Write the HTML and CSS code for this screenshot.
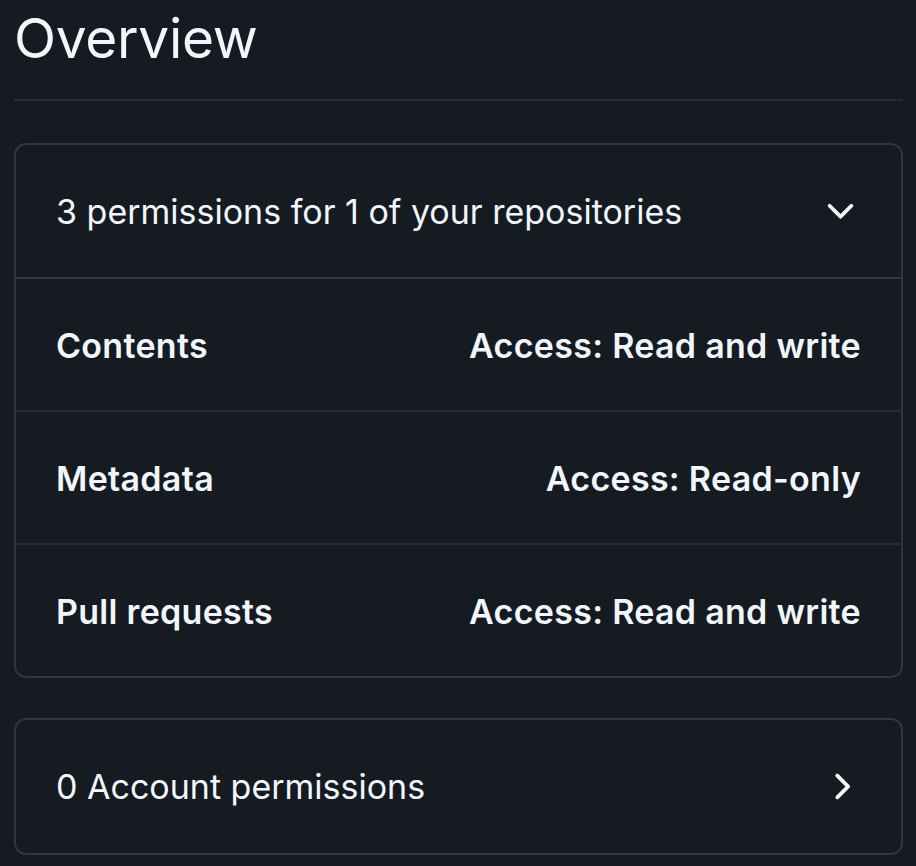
FILE: index.html
```html
<!DOCTYPE html>
<html lang="en">
<head>
<meta charset="utf-8">
<title>Overview</title>
<link rel="stylesheet" href="styles.css">
</head>
<body>
<main class="page">
  <h1 class="title">Overview</h1>
  <section class="box">
    <div class="box-header">
      <span class="header-text">3 permissions for 1 of your repositories</span>
      <svg class="icon" viewBox="0 0 16 16" aria-hidden="true"><path d="M12.78 5.22a.749.749 0 0 1 0 1.06l-4.25 4.25a.749.749 0 0 1-1.06 0L3.22 6.28a.749.749 0 1 1 1.06-1.06L8 8.94l3.72-3.72a.749.749 0 0 1 1.06 0Z"/></svg>
    </div>
    <div class="row"><span class="row-name">Contents</span><span class="row-access">Access: Read and write</span></div>
    <div class="row"><span class="row-name">Metadata</span><span class="row-access">Access: Read-only</span></div>
    <div class="row"><span class="row-name">Pull requests</span><span class="row-access">Access: Read and write</span></div>
  </section>
  <section class="box box-single">
    <div class="box-header no-border">
      <span class="header-text">0 Account permissions</span>
      <svg class="icon" viewBox="0 0 16 16" aria-hidden="true"><path d="M6.22 3.22a.75.75 0 0 1 1.06 0l4.25 4.25a.75.75 0 0 1 0 1.06l-4.25 4.25a.751.751 0 0 1-1.042-.018.751.751 0 0 1-.018-1.042L9.940 8 6.22 4.28a.75.75 0 0 1 0-1.06Z"/></svg>
    </div>
  </section>
</main>
</body>
</html>
```
FILE: styles.css
```css
html, body {
  margin: 0;
  padding: 0;
  background: #161b22;
}
body {
  font-family: Inter, "Noto Sans", sans-serif;
  color: #f0f6fc;
}
.page {
  padding: 0 13px 0 14px;
}
.title {
  margin: 0;
  font-size: 55px;
  font-weight: 400;
  line-height: 76px;
  padding-bottom: 23px;
  border-bottom: 2px solid #262c36;
  letter-spacing: -0.3px;
}
.box {
  margin-top: 42px;
  border: 2px solid #30363d;
  border-radius: 12px;
}
.box-single {
  margin-top: 40px;
}
.box-header {
  display: flex;
  align-items: center;
  justify-content: space-between;
  padding: 0 40px 0 41px;
  height: 132px;
  border-bottom: 2px solid #30363d;
}
.box-header.no-border {
  border-bottom: none;
  height: 133px;
}
.header-text {
  font-size: 34px;
  margin-left: -1px;
}
.icon {
  width: 41px;
  height: 41px;
  fill: #f0f6fc;
}
.row {
  display: flex;
  align-items: center;
  justify-content: space-between;
  padding: 2px 40px 0 40px;
  height: 129px;
  font-size: 34px;
  font-weight: 600;
  letter-spacing: 0.3px;
  border-bottom: 2px solid #262c36;
}
.row:last-child {
  border-bottom: none;
}
```
